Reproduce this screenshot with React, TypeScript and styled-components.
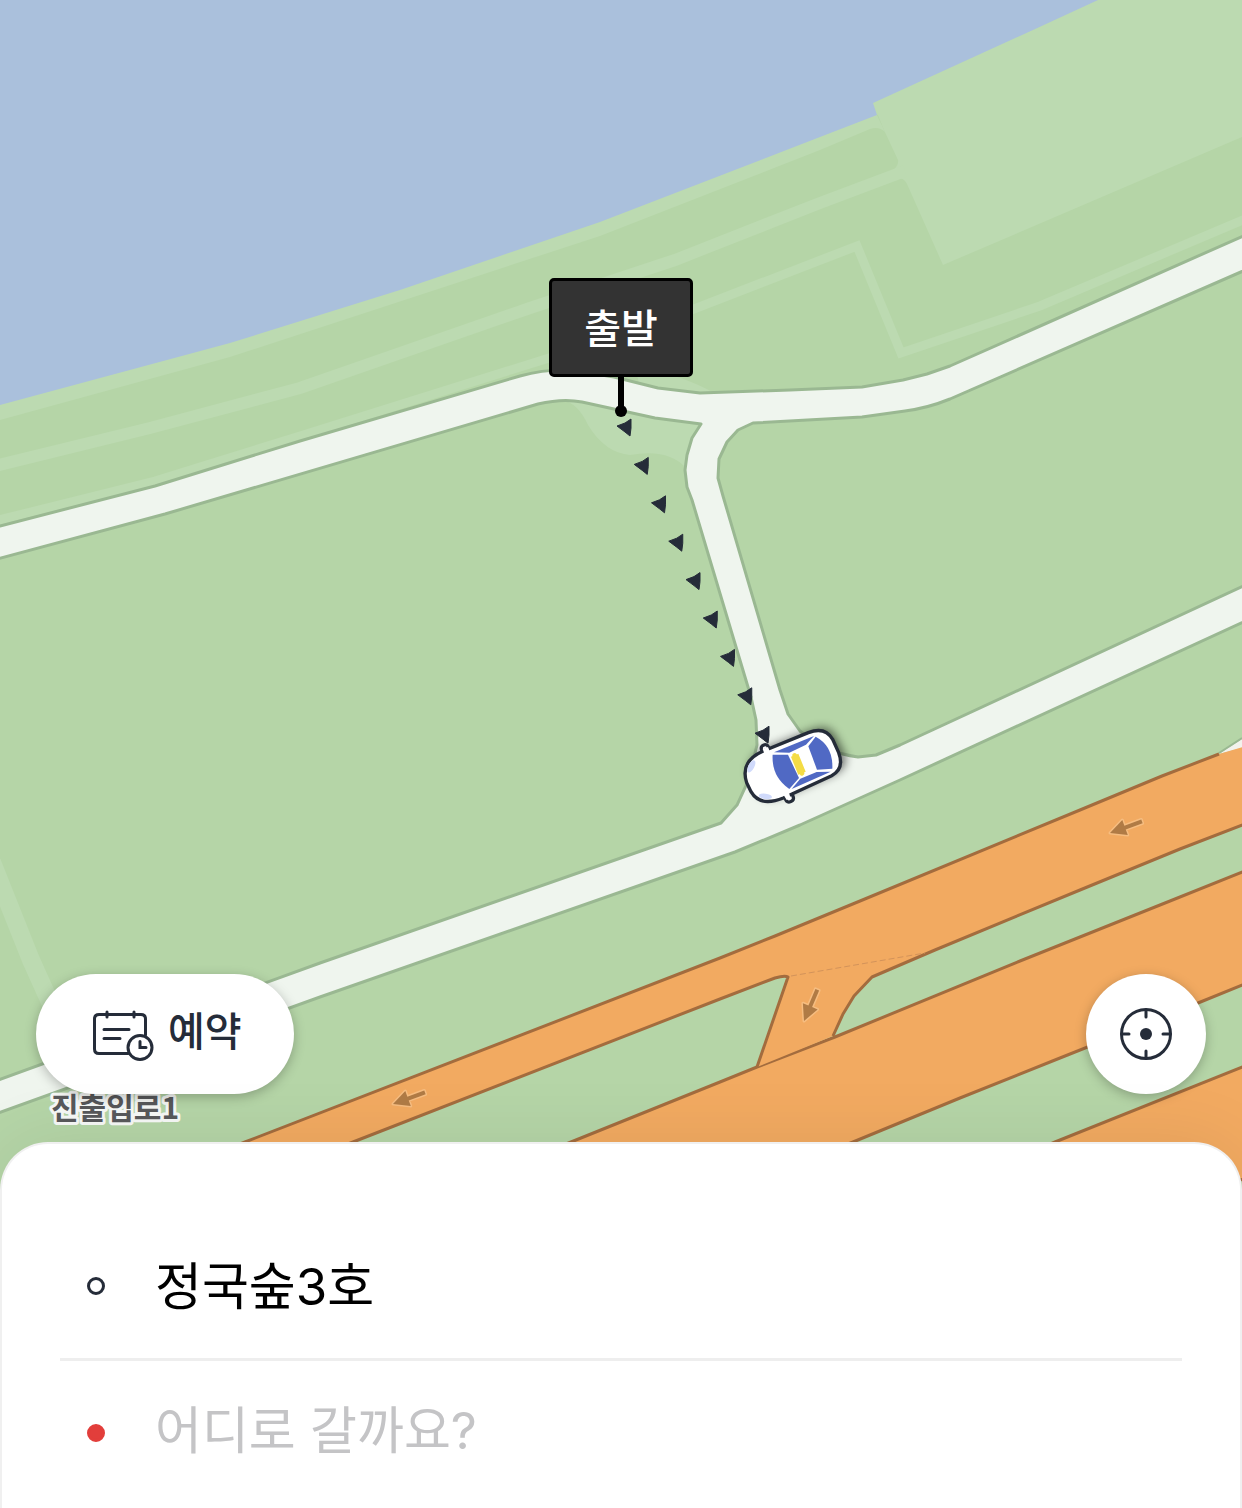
import { useState } from "react";
import styled, { createGlobalStyle } from "styled-components";

const INK = "#252c39";

const GlobalStyle = createGlobalStyle`
  *, *::before, *::after { box-sizing: border-box; }
  body { margin: 0; font-family: Inter, "Noto Sans CJK KR", sans-serif; color: #000; background: #fff; }
  button, input { font: inherit; color: inherit; }
`;

const Screen = styled.main`
  display: flex;
  flex-direction: column;
  min-height: 100vh;
  overflow: hidden;
`;

const MapArea = styled.section`
  position: relative;
  flex: 1;
  display: flex;
  flex-direction: column;
  justify-content: flex-end;
  min-height: 640px;
  padding: 0 36px 96px;
  overflow: hidden;
  background: #b5d5a7;
`;

const MapCanvas = styled.svg`
  position: absolute;
  inset: 0;
  width: 100%;
  height: 100%;
`;

const Pin = styled.div`
  position: absolute;
  top: 278px;
  left: 50%;
  display: flex;
  flex-direction: column;
  align-items: center;
  transform: translateX(-50%);
`;

const PinLabel = styled.span`
  display: flex;
  align-items: center;
  justify-content: center;
  width: 144px;
  height: 99px;
  padding-top: 2px;
  border: 3px solid #000;
  border-radius: 5px;
  background: #333;
  color: #fff;
  font-size: 40px;
  font-weight: 500;
  line-height: 60px;
`;

const PinStem = styled.span`
  width: 6px;
  height: 30px;
  background: #000;
`;

const PinTip = styled.span`
  width: 12px;
  height: 12px;
  margin-top: -2px;
  border-radius: 50%;
  background: #000;
`;

const MapControls = styled.div`
  position: relative;
  display: flex;
  justify-content: space-between;
  align-items: center;
`;

const FloatingButton = styled.button<{ $round?: boolean }>`
  display: flex;
  align-items: center;
  justify-content: center;
  gap: 14px;
  height: 120px;
  width: ${(p) => (p.$round ? "120px" : "auto")};
  padding: ${(p) => (p.$round ? "0" : "0 52px 0 56px")};
  border: 0;
  border-radius: 60px;
  background: #fff;
  color: ${INK};
  font-size: 40px;
  font-weight: 500;
  line-height: 60px;
  box-shadow: 0 3px 12px rgba(0, 0, 0, 0.25);
  cursor: pointer;
`;

const ButtonText = styled.span`
  padding-bottom: 4px;
`;

const Sheet = styled.form`
  position: relative;
  margin-top: -48px;
  padding: 70px 58px 3px;
  border: 2px solid #f0f0f0;
  border-bottom: 0;
  border-radius: 48px 48px 0 0;
  background: #fff;
  box-shadow: 0 0 72px rgba(0, 0, 0, 0.08);
`;

const PlaceRow = styled.label`
  display: flex;
  align-items: center;
  gap: 50px;
  height: 144px;
  padding: 0 27px;

  & + & {
    height: 147px;
    border-top: 3px solid #eee;
  }
`;

const Dot = styled.span<{ $filled?: boolean }>`
  flex: none;
  width: 18px;
  height: 18px;
  border: 3px solid ${(p) => (p.$filled ? "#e23e3b" : INK)};
  border-radius: 50%;
  background: ${(p) => (p.$filled ? "#e23e3b" : "transparent")};
`;

const PlaceInput = styled.input`
  flex: 1;
  min-width: 0;
  height: 90px;
  padding: 0 0 6px;
  border: 0;
  outline: 0;
  background: transparent;
  font-size: 51px;

  &::placeholder {
    color: #c4c4c6;
    opacity: 1;
  }
`;

const roadOutline =
  "M-10 528 L0 526 L155 486 L300 441 L520 376 Q545 369 570 370 L614 377 L658 388 L700 393 L790 390 L862 387 " +
  "L903 380 L927 374 L950 366 L1250 233 L1250 268 L950 399 Q928 408 905 411 L862 417 L753 423 L738 430 L727 442 " +
  "L719 459 L718 478 L723 496 L780 690 L788 714 L800 731 Q825 753 858 757 L876 755 L900 745 L1250 583 " +
  "L1250 619 L900 780 L800 825 L735 852 L320 997 L-10 1116 L-10 1083 L320 963 L721 823 L737 805 L748 781 " +
  "L757 745 L756 720 L751 697 L692 500 L687 487 L685 470 L687 455 L692 438 L701 424 L655 418 L582 402 " +
  "Q563 398 538 404 L165 514 L-10 561 Z";

const trail = Array.from({ length: 9 }, (_, i) => ({ x: 617 + i * 17.25, y: 427 + i * 38.4 }));

const trafficArrows = [
  { x: 1110, y: 833, angle: -20 },
  { x: 393, y: 1104, angle: -20 },
  { x: 804, y: 1021, angle: -67 },
];

function TrafficArrow({ x, y, angle }: { x: number; y: number; angle: number }) {
  const shape = "M0 0 L16 -8 L16 -2 L34 -2 L34 2 L16 2 L16 8 Z";
  return (
    <g transform={`translate(${x} ${y}) rotate(${angle})`}>
      <path d={shape} fill="none" stroke="#f8c48d" strokeWidth="3" strokeLinejoin="round" opacity="0.7" />
      <path d={shape} fill="#b07b45" />
    </g>
  );
}

function Taxi() {
  return (
    <g transform="translate(700 690) scale(0.3333)">
      <path
        d="M190 183 L325 130 Q375 108 398 150 L425 205 Q436 240 395 262 L250 323 Q180 352 155 305 L140 270 Q125 215 190 183Z"
        fill="#000"
        opacity="0.55"
        filter="url(#taxi-shadow)"
        transform="translate(10 -10)"
      />
      <g fill="#fff" stroke={INK} strokeWidth="10">
        <rect x="186" y="164" width="22" height="34" rx="10" transform="rotate(-22 197 180)" />
        <rect x="254" y="302" width="24" height="34" rx="10" transform="rotate(-22 266 319)" />
        <path d="M190 183 L325 128 Q375 108 398 148 L416 188 Q434 236 395 257 L250 324 Q180 352 153 305 L140 278 Q119 214 190 183Z" />
      </g>
      <path d="M188 177 L204 171 L211 188 L195 196Z M251 315 L267 308 L272 325 L260 330Z" fill="#fff" />
      <g fill="#5069c4">
        <path d="M218 194 L264 194 L297 264 L268 297 Q214 260 218 194Z" />
        <path d="M222 187 L342 138 L318 164 L268 188Z" />
        <path d="M325 169 L347 140 Q400 168 397 236 L351 239Z" />
        <path d="M301 266 L350 246 L392 245 L275 297Z" />
      </g>
      <path d="M284 196 L306 250" stroke="#f4dc46" strokeWidth="24" strokeLinecap="butt" />
      <path d="M284 196 L306 250" stroke="#f4dc46" strokeWidth="14" strokeLinecap="round" />
      <g fill="#d0dafb">
        <ellipse cx="154" cy="229" rx="9" ry="20" transform="rotate(28 154 229)" />
        <ellipse cx="196" cy="319" rx="20" ry="8" transform="rotate(8 196 319)" />
      </g>
    </g>
  );
}

function RiversideMap() {
  return (
    <MapCanvas viewBox="0 0 1242 1190" preserveAspectRatio="xMidYMid slice" role="img" aria-label="지도">
      <defs>
        <filter id="taxi-shadow" x="-30%" y="-30%" width="160%" height="160%">
          <feGaussianBlur stdDeviation="14" />
        </filter>
      </defs>
      <rect width="1242" height="1190" fill="#b5d5a7" />

      <g fill="#bcdab1">
        <path d="M0 0 H1110 L877 115 L885 132 Q879 126 870 129 L820 150 L600 236 L230 357 L0 420Z" />
        <path d="M873 103 L1098 0 H1242 V137 L943 265 L907 184 Q904 177 896 178 L890 172 Q899 167 898 160 L884 130Z" />
        <path d="M562 400 Q578 403 588 425 Q605 453 630 455 Q668 448 686 468 L704 420Z" />
        <path d="M635 366 Q685 376 714 393 L640 388Z" />
      </g>
      <path d="M0 0 H1098 L1033 30 L873 103 L877 115 L820 137 L600 222 L400 290 L230 343 L0 405Z" fill="#aac0dc" />
      <g fill="none" stroke="#bcdab1">
        <path d="M-5 466 L150 428 L300 388 L530 308 L675 260 L820 203 L905 171" strokeWidth="12" />
        <path d="M-5 521 L155 481 L300 436 L549 358 L694 309 L857 246 L901 353 L1040 306 L1245 219" strokeWidth="9" />
        <path d="M-8 862 L31 960 L58 1020" strokeWidth="18" />
      </g>

      <path d={roadOutline} fill="#eff5ee" stroke="#9ab892" strokeWidth="3" strokeLinejoin="round" />

      <path d="M1219 754 L1242 739 V748Z" fill="#f3f2ed" />
      <path d="M1219 753 L1242 738" stroke="#9ab892" strokeWidth="2" />

      <g fill="#f2aa61" stroke="#a36c3e" strokeWidth="3" strokeLinejoin="round">
        <path d="M1250 869 L1170 901 L1020 961 L835 1037 L757 1067 L720 1082 L571 1142 L440 1195 H720 L853 1142 L960 1098 L1060 1058 L1198 1003 L1250 982Z" />
        <path d="M1250 1064 L1055 1142 L930 1195 H1205 L1250 1176Z" />
      </g>
      <path
        d="M1250 745 L1219 754 L1162 776 L1080 810 L860 901 L775 936 L720 958 L245 1142 L110 1195 H220 L353 1142 L720 999 L775 978 L788 976 L757 1067 L833 1036 L843 1014 L854 996 L872 977 L935 950 L1080 890 L1180 849 L1250 822Z"
        fill="#f2aa61"
      />
      <g fill="none" stroke="#a36c3e" strokeWidth="3" strokeLinejoin="round">
        <path d="M1219 754 L1162 776 L1080 810 L860 901 L775 936 L720 958 L245 1142 L110 1195" />
        <path d="M220 1195 L353 1142 L720 999 L775 978 Q785 975 788 977 L757 1067" />
        <path d="M833 1036 L843 1014 L854 996 L872 977 L935 950 L1080 890 L1180 849 L1250 822" />
      </g>
      <path d="M791 976 L925 953" stroke="#d3935a" strokeWidth="1" strokeDasharray="6 3" />

      {trafficArrows.map((a) => (
        <TrafficArrow key={`${a.x}-${a.y}`} {...a} />
      ))}

      <text
        x="51"
        y="1119"
        fontFamily="'Noto Sans CJK KR', sans-serif"
        fontSize="30"
        fontWeight="700"
        fill="#58595b"
        stroke="#f6f8f6"
        strokeWidth="6"
        strokeLinejoin="round"
        paintOrder="stroke"
      >
        진출입로1
      </text>

      {trail.map((p) => (
        <path
          key={p.y}
          d="M0 -1 L8 -4 L14 -8 L14 1 L13 9 L8 5 Z"
          transform={`translate(${p.x} ${p.y})`}
          fill={INK}
          stroke={INK}
          strokeWidth="1"
          strokeLinejoin="round"
        />
      ))}
      <Taxi />
    </MapCanvas>
  );
}

function ReserveIcon() {
  return (
    <svg width="62" height="54" viewBox="0 0 62 54" fill="none" stroke={INK} strokeWidth="3" strokeLinecap="round" aria-hidden="true">
      <path d="M36 46.500 H7 Q2.500 46.500 2.500 42 V12 Q2.500 7.500 7 7.500 H49 Q53.500 7.500 53.500 12 V28" />
      <path d="M15 5 V10 M42 5 V10 M12 22.500 H37 M12 31.500 H28" />
      <circle cx="48" cy="40.500" r="12" />
      <path d="M48 34.500 V40.500 H54" strokeLinejoin="miter" />
    </svg>
  );
}

function LocateIcon() {
  return (
    <svg width="52" height="52" viewBox="0 0 52 52" fill="none" stroke={INK} strokeWidth="3" strokeLinecap="round" aria-hidden="true">
      <circle cx="26" cy="26" r="24.500" />
      <path d="M26 2 V9 M26 43 V50 M2 26 H9 M43 26 H50" />
      <circle cx="26" cy="26" r="6" fill={INK} stroke="none" />
    </svg>
  );
}

export default function App() {
  const [origin, setOrigin] = useState("정국숲3호");
  const [destination, setDestination] = useState("");

  return (
    <>
      <GlobalStyle />
      <Screen>
        <MapArea>
          <RiversideMap />
          <Pin>
            <PinLabel>출발</PinLabel>
            <PinStem />
            <PinTip />
          </Pin>
          <MapControls>
            <FloatingButton type="button">
              <ReserveIcon />
              <ButtonText>예약</ButtonText>
            </FloatingButton>
            <FloatingButton type="button" $round aria-label="현재 위치">
              <LocateIcon />
            </FloatingButton>
          </MapControls>
        </MapArea>
        <Sheet onSubmit={(e) => e.preventDefault()}>
          <PlaceRow>
            <Dot />
            <PlaceInput aria-label="출발지" value={origin} onChange={(e) => setOrigin(e.target.value)} />
          </PlaceRow>
          <PlaceRow>
            <Dot $filled />
            <PlaceInput
              aria-label="도착지"
              placeholder="어디로 갈까요?"
              value={destination}
              onChange={(e) => setDestination(e.target.value)}
            />
          </PlaceRow>
        </Sheet>
      </Screen>
    </>
  );
}
